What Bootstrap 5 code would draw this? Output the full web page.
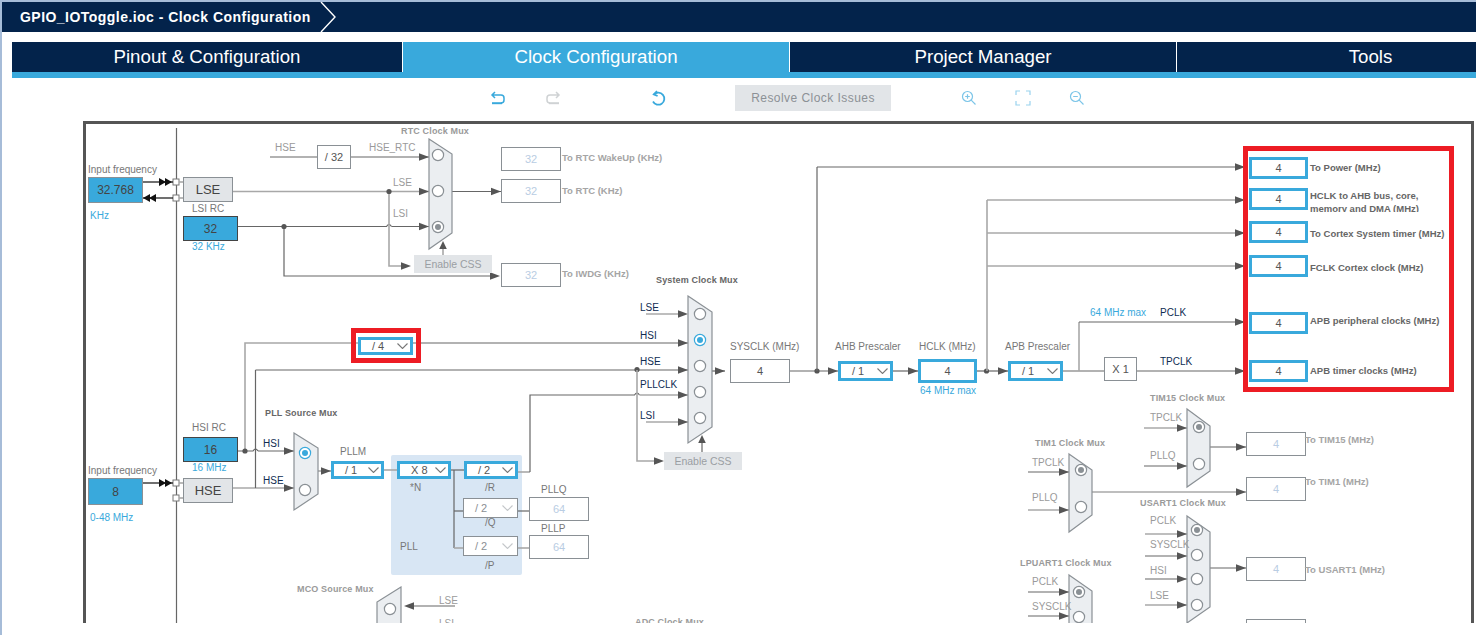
<!DOCTYPE html>
<html lang="en">
<head>
    <meta charset="UTF-8">
    <meta name="viewport" content="width=device-width, initial-scale=1.0">
    <title>GPIO_IOToggle.ioc - Clock Configuration</title>
    <link href="https://cdn.jsdelivr.net/npm/bootstrap@5.3.0/dist/css/bootstrap.min.css" rel="stylesheet">
    <style>
        html, body { height: 635px; overflow: hidden; background: #fff; }
        body { font-family: "Liberation Sans", Arial, sans-serif; }
        .app-shell { height: 635px; padding: 2px 0 0 2px; background: linear-gradient(#a6bcd8, #a6bcd8) 0 0 / 2px 100% no-repeat, linear-gradient(#a6bcd8, #a6bcd8) 0 0 / 100% 2px no-repeat; }
        .title-bar { height: 30px; background: #03234b; color: #fff; font-weight: 700; font-size: 14px; letter-spacing: .46px; padding-left: 18px; }
        .title-bar svg { margin-left: 9px; }
        .tab-strip { display: grid; grid-template-columns: 391px 387px 387px 387px; margin: 10px 0 0 10px; height: 36px; border-bottom: 6px solid #39a9dc; overflow: hidden; }
        .tab-item { display: flex; align-items: center; justify-content: center; height: 30px; background: #03234b; color: #fff; font-size: 18.7px; border-right: 1px solid #fff; text-decoration: none; }
        .tab-item:last-child { border-right: 0; }
        .tab-item.is-current { background: #39a9dc; }
        .tool-row { height: 43px; padding: 0 0 3px 488px; }
        .tool-row svg { flex: none; }
        .gap-redo { margin-left: 39px; }
        .gap-refresh { margin-left: 89px; }
        .gap-resolve { margin-left: 69px; }
        .gap-zoom { margin-left: 70px; }
        .gap-fit { margin-left: 38px; }
        .resolve-btn { width: 156px; height: 26px; border: 0; background: #e2e5e8; color: #8c9196; font-size: 12px; letter-spacing: .45px; padding: 0; }
        .clock-frame { position: relative; margin-left: 81px; width: 1391px; height: 502px; border: 3px solid #555; border-bottom: 0; overflow: hidden; }
        .wires { position: absolute; left: 0; top: 0; }
        .pll-zone { position: absolute; background: #d8e6f4; border-radius: 2px; }
        .node { position: absolute; display: flex; align-items: center; justify-content: center; font-size: 11px; color: #555; background: #fff; }
        .node-src { background: #39a9dc; border: 1px solid #8a9095; font-size: 12px; color: #444; }
        .node-src-dark { border-color: #444; }
        .node-hw { background: #e2e5e8; border: 1px solid #8a9095; font-size: 13px; color: #444; }
        .node-val { border: 1px solid #8a9095; }
        .node-live { border: 3px solid #39a9dc; }
        .node-off { border: 1px solid #8a9095; color: #b9cde3; font-size: 11px; }
        .node-css { background: #e2e5e8; color: #9a9ea3; font-size: 10.5px; padding-top: 2px; }
        .node-drop { justify-content: space-between; padding: 0 2px 0 11px; font-size: 11px; }
        .node-drop.node-off { color: #8a8f94; padding: 0 4px 0 11px; }
        .diag-label { position: absolute; white-space: nowrap; transform: translateY(-50%); font-size: 10px; line-height: 1; color: #777; }
        .lb-blue { color: #39a9dc; }
        .lb-navy { color: #0f2c52; }
        .lb-head { font-weight: 700; font-size: 9px; color: #9a9a9a; letter-spacing: .15px; }
        .lb-head-dark { color: #666; }
        .lb-out { font-weight: 700; font-size: 9.5px; color: #666; }
        .lb-out-off { font-weight: 700; font-size: 9.5px; color: #a5a5a5; }
        .lb-off { color: #9a9a9a; }
        .lb-clip { height: 8px; overflow: hidden; }
        .red-mark { position: absolute; border: 5px solid #ed1c24; z-index: 5; }
    </style>
</head>
<body>
    <div class="app-shell">
        <header class="title-bar d-flex align-items-center">
            <span>GPIO_IOToggle.ioc - Clock Configuration</span>
            <svg width="18" height="30" viewBox="0 0 18 30"><path d="M1 0 L15 15 L1 30" fill="none" stroke="#fff" stroke-width="1.4"/></svg>
        </header>

        <nav class="tab-strip">
            <a class="tab-item" href="#">Pinout &amp; Configuration</a>
            <a class="tab-item is-current" href="#">Clock Configuration</a>
            <a class="tab-item" href="#">Project Manager</a>
            <a class="tab-item" href="#">Tools</a>
        </nav>

        <!-- Toolbar -->
        <div class="tool-row d-flex align-items-center">
            <svg width="16" height="16" viewBox="0 0 16 16" fill="none" stroke="#39a9dc" stroke-width="1.5"><path d="M5 2 L2 5 L5 8 M2 5 H11 Q14 5 14 8 V10 Q14 13 11 13"/><path d="M2 13.2 H12" stroke-width="2"/></svg>
            <svg class="gap-redo" width="16" height="16" viewBox="0 0 16 16" fill="none" stroke="#cfd2d4" stroke-width="1.5"><path d="M11 2 L14 5 L11 8 M14 5 H5 Q2 5 2 8 V10 Q2 13 5 13"/><path d="M4 13.2 H14" stroke-width="2"/></svg>
            <svg class="gap-refresh" width="16" height="17" viewBox="0 0 16 17" fill="none" stroke="#39a9dc" stroke-width="1.8"><path d="M4 4.5 A6 6 0 1 1 3 11.5"/><path d="M7 1 L3.8 4.4 L7.6 6"/></svg>
            <button class="resolve-btn gap-resolve" type="button">Resolve Clock Issues</button>
            <svg class="gap-zoom" width="16" height="16" viewBox="0 0 16 16" fill="none" stroke="#7cc5e8" stroke-width="1.2"><circle cx="6.5" cy="6.5" r="5"/><path d="M10.2 10.2 L14.5 14.5 M4.2 6.5 H8.8 M6.5 4.2 V8.8"/></svg>
            <svg class="gap-fit" width="16" height="16" viewBox="0 0 16 16" fill="none" stroke="#9ad3ee" stroke-width="1.2"><path d="M1 5 V1 H5 M11 1 H15 V5 M15 11 V15 H11 M5 15 H1 V11"/></svg>
            <svg class="gap-fit" width="16" height="16" viewBox="0 0 16 16" fill="none" stroke="#7cc5e8" stroke-width="1.2"><circle cx="6.5" cy="6.5" r="5"/><path d="M10.2 10.2 L14.5 14.5 M4.2 6.5 H8.8"/></svg>
        </div>

        <!-- Clock tree -->
        <div class="clock-frame" id="clockFrame">
            <div class="pll-zone" id="pllZone"></div>
            <svg class="wires" id="wires" width="1385" height="501" viewBox="86 124 1385 501"></svg>
        </div>
    </div>

    <script src="https://cdn.jsdelivr.net/npm/bootstrap@5.3.0/dist/js/bootstrap.bundle.min.js"></script>
    <script>
        // All data below is in screenshot coordinates, frame inner corner is at 86,124
        const OX = 86, OY = 124;
        const frame = document.getElementById('clockFrame');
        let svg = '';

        const DARK = '#666', SOFT = '#a8a8a8', TIP = '#555';

        function place(el, x1, y1, x2, y2) {
            el.style.left = (x1 - OX) + 'px';
            el.style.top = (y1 - OY) + 'px';
            el.style.width = (x2 - x1) + 'px';
            el.style.height = (y2 - y1) + 'px';
        }

        function line(d, soft) {
            svg += `<path d="${d}" fill="none" stroke="${soft ? SOFT : DARK}" stroke-width="${soft ? 1.6 : 1.2}"/>`;
        }
        function dot(x, y) {
            svg += `<circle cx="${x}" cy="${y}" r="2.6" fill="#555"/>`;
        }
        function tipRight(x, y) {
            svg += `<path d="M${x} ${y} l-10 -3.8 v7.6 z" fill="${TIP}"/>`;
        }
        function tipLeft(x, y) {
            svg += `<path d="M${x} ${y} l10 -3.8 v7.6 z" fill="${TIP}"/>`;
        }
        function tipUp(x, y) {
            svg += `<path d="M${x} ${y} l-3.8 8 h7.6 z" fill="${TIP}"/>`;
        }
        // horizontal wire ending in an arrow, from x1 to x2
        function arrow(x1, y, x2, soft) {
            line(`M${x1} ${y} H${x2}`, soft);
            tipRight(x2, y);
        }

        // Mux shapes, with their selector circles: [cx, cy, state]
        function mux(points, circles) {
            svg += `<polygon points="${points}" fill="#ebeef1" stroke="#8a9095" stroke-width="1.2"/>`;
            circles.forEach(c => {
                const blue = c[2] === 'on';
                const stroke = blue ? '#39a9dc' : '#8a9095';
                svg += `<circle cx="${c[0]}" cy="${c[1]}" r="5.6" fill="#fff" stroke="${stroke}" stroke-width="1.2"/>`;
                if (c[2]) svg += `<circle cx="${c[0]}" cy="${c[1]}" r="3" fill="${blue ? '#39a9dc' : '#8a9095'}"/>`;
            });
        }

        // Left input rail
        line('M176.5 128 V625');
        [[176, 182], [176, 198], [176, 483], [176, 498]].forEach(p => {
            svg += `<rect x="${p[0] - 3}" y="${p[1] - 3}" width="6" height="6" fill="#fff" stroke="#777"/>`;
            line(`M${p[0] + 3} ${p[1]} H183`, true);
        });
        function blackArrows(x1, y, x2, dir) {
            svg += `<path d="M${x1} ${y} H${x2}" stroke="#111" stroke-width="1.2"/>`;
            const base = dir > 0 ? x2 - 14 : x1;
            [0, 6].forEach(s => {
                const at = base + s;
                svg += dir > 0
                    ? `<path d="M${at} ${y - 4} l7 4 l-7 4 z" fill="#111"/>`
                    : `<path d="M${at + 7} ${y - 4} l-7 4 l7 4 z" fill="#111"/>`;
            });
        }
        blackArrows(143, 182, 173, 1);
        blackArrows(143, 198, 173, -1);
        blackArrows(143, 483, 173, 1);

        // RTC part
        line('M270 157 H317');
        arrow(351, 157, 429);
        arrow(233, 191.5, 429, true);
        line('M238 226.5 H386.5 q2.5 -4 5 0');
        arrow(391.5, 226.5, 429);
        line('M389 191 V266 H402', true);
        tipRight(411, 266);
        line('M284 226 V276 H495');
        tipRight(500, 276);
        arrow(452, 191.5, 501);
        dot(284, 226.5);
        dot(389, 191.5);
        line('M443 255 V245', true);
        tipUp(443, 241);

        // HSI, HSE and the system clock mux inputs
        line('M238 451 H253 q2.5 -4 5 0');
        arrow(258, 451, 294);
        line('M245 451 V343 H358', true);
        arrow(413, 343, 688);
        arrow(233, 488, 294, true);
        line('M255.5 488 V370');
        arrow(255.5, 370, 688);
        dot(245, 451);
        dot(637, 369.5);
        line('M646 314 H680', true);
        tipRight(688, 314);
        line('M530 472 H518', true);
        line('M530 472 V395 H634.5 q2.5 -4 5 0');
        arrow(639.5, 395, 688, true);
        arrow(646, 422, 688, true);
        line('M637 370 V461 H656', true);
        tipRight(664, 461);
        line('M702 452 V441');
        tipUp(702, 435);

        // PLL block
        arrow(318, 471, 331, true);
        line('M384 470 H397', true);
        line('M451 470 H464');
        line('M454 470 V548');
        line('M454 511 H463');
        line('M454 548 H463', true);
        line('M518 511 H529');
        line('M518 548 H529', true);

        // SYSCLK onward
        arrow(712, 371, 725);
        arrow(790, 371, 838);
        dot(817, 371);
        line('M817 371 V167');
        arrow(817, 167, 1245);
        arrow(893, 371, 918);
        arrow(977, 371, 1008);
        dot(986.5, 371);
        line('M987 371 V200', true);
        arrow(987, 200, 1245, true);
        arrow(987, 233, 1245, true);
        arrow(987, 266, 1245, true);
        line('M1063 371 H1104');
        line('M1079 371 V322', true);
        arrow(1079, 322, 1245);
        arrow(1137, 371, 1245);

        // MCO
        line('M455 606 H410');
        tipLeft(404, 606);

        // Peripheral muxes
        arrow(1144, 428, 1187, true);
        arrow(1144, 466, 1187);
        arrow(1210, 447, 1246);
        arrow(1028, 472, 1069);
        arrow(1028, 510, 1069, true);
        arrow(1092, 492, 1246, true);
        arrow(1145, 534, 1187, true);
        arrow(1145, 556, 1187);
        arrow(1145, 579, 1187);
        arrow(1145, 605, 1187, true);
        arrow(1210, 568, 1246);
        arrow(1028, 592, 1069);
        arrow(1028, 616, 1069);

        mux('429,139 452,154 452,233 429,249', [[438, 155], [438, 191], [438, 227, 'grey']]);
        mux('688,296 712,312 712,427 688,443', [[700, 314], [700, 340, 'on'], [700, 366], [700, 392], [700, 418]]);
        mux('294,433 318,448 318,494 294,510', [[305, 453, 'on'], [305, 490]]);
        mux('401,587 377,602 377,700 401,715', [[390, 609]]);
        mux('1187,409 1210,426 1210,471 1187,487', [[1199, 427, 'grey'], [1199, 464]]);
        mux('1069,454 1092,470 1092,515 1069,532', [[1081, 470, 'grey'], [1081, 507]]);
        mux('1187,516 1210,532 1210,607 1187,623', [[1197, 530, 'grey'], [1197, 555], [1197, 579], [1197, 605]]);
        mux('1069,575 1092,591 1092,700 1069,715', [[1079, 592, 'grey'], [1079, 617]]);

        document.getElementById('wires').innerHTML = svg;
        place(document.getElementById('pllZone'), 391, 455, 522, 575);

        // Boxes: x1, y1, x2, y2, text, class
        const nodes = [
            [88, 177, 143, 203, '32.768', 'node-src'],
            [88, 478, 143, 505, '8', 'node-src'],
            [183, 216, 238, 241, '32', 'node-src node-src-dark'],
            [183, 437, 238, 462, '16', 'node-src node-src-dark'],
            [183, 177, 233, 202, 'LSE', 'node-hw'],
            [183, 478, 233, 503, 'HSE', 'node-hw'],
            [317, 145, 351, 169, '/ 32', 'node-val'],
            [501, 147, 561, 171, '32', 'node-off'],
            [501, 179, 561, 203, '32', 'node-off'],
            [501, 263, 561, 287, '32', 'node-off'],
            [529, 497, 589, 521, '64', 'node-off'],
            [529, 535, 589, 559, '64', 'node-off'],
            [414, 255, 492, 273, 'Enable CSS', 'node-css'],
            [664, 452, 742, 470, 'Enable CSS', 'node-css'],
            [730, 359, 790, 383, '4', 'node-val'],
            [918, 359, 977, 383, '4', 'node-live'],
            [1104, 357, 1137, 381, 'X 1', 'node-val'],
            [1249, 157, 1308, 179, '4', 'node-live'],
            [1249, 188, 1308, 210, '4', 'node-live'],
            [1249, 221, 1308, 243, '4', 'node-live'],
            [1249, 255, 1308, 277, '4', 'node-live'],
            [1249, 312, 1308, 334, '4', 'node-live'],
            [1249, 360, 1308, 382, '4', 'node-live'],
            [1246, 432, 1306, 456, '4', 'node-off'],
            [1246, 477, 1306, 501, '4', 'node-off'],
            [1246, 557, 1306, 581, '4', 'node-off'],
            [1246, 619, 1306, 643, '', 'node-off']
        ];
        nodes.forEach(n => {
            const el = document.createElement('div');
            el.className = 'node ' + n[5];
            el.textContent = n[4];
            place(el, n[0], n[1], n[2], n[3]);
            frame.appendChild(el);
        });

        // Dropdowns
        const drops = [
            [358, 337, 413, 355, '/ 4', 'node-live'],
            [331, 461, 384, 479, '/ 1', 'node-live'],
            [397, 461, 451, 479, 'X 8', 'node-live'],
            [464, 461, 518, 479, '/ 2', 'node-live'],
            [463, 498, 518, 518, '/ 2', 'node-off'],
            [463, 536, 518, 556, '/ 2', 'node-off'],
            [838, 361, 893, 381, '/ 1', 'node-live'],
            [1008, 361, 1063, 381, '/ 1', 'node-live']
        ];
        drops.forEach(d => {
            const el = document.createElement('div');
            const faint = d[5] === 'node-off';
            el.className = 'node node-drop ' + d[5];
            el.innerHTML = `<span>${d[4]}</span><svg width="11" height="6" viewBox="0 0 11 6" fill="none" stroke="${faint ? '#c4c7ca' : '#777'}" stroke-width="1.1"><path d="M.5 .5 L5.5 5.5 L10.5 .5"/></svg>`;
            place(el, d[0], d[1], d[2], d[3]);
            frame.appendChild(el);
        });

        // Labels: x, centre y, text, class
        const labels = [
            [88, 170, 'Input frequency', ''],
            [90, 216, 'KHz', 'lb-blue'],
            [192, 209, 'LSI RC', ''],
            [192, 247, '32 KHz', 'lb-blue'],
            [192, 428, 'HSI RC', ''],
            [192, 468, '16 MHz', 'lb-blue'],
            [88, 471, 'Input frequency', ''],
            [90, 518, '0-48 MHz', 'lb-blue'],
            [275, 148, 'HSE', 'lb-off'],
            [369, 148, 'HSE_RTC', 'lb-off'],
            [393, 183, 'LSE', 'lb-off'],
            [393, 214, 'LSI', 'lb-off'],
            [401, 131, 'RTC Clock Mux', 'lb-head'],
            [656, 280, 'System Clock Mux', 'lb-head lb-head-dark'],
            [265, 413, 'PLL Source Mux', 'lb-head lb-head-dark'],
            [297, 589, 'MCO Source Mux', 'lb-head'],
            [635, 622, 'ADC Clock Mux', 'lb-head'],
            [1150, 398, 'TIM15 Clock Mux', 'lb-head'],
            [1035, 443, 'TIM1 Clock Mux', 'lb-head'],
            [1140, 503, 'USART1 Clock Mux', 'lb-head'],
            [1020, 563, 'LPUART1 Clock Mux', 'lb-head'],
            [562, 158, 'To RTC WakeUp (KHz)', 'lb-out-off'],
            [562, 191, 'To RTC (KHz)', 'lb-out-off'],
            [562, 274, 'To IWDG (KHz)', 'lb-out-off'],
            [640, 308, 'LSE', 'lb-navy'],
            [640, 336, 'HSI', 'lb-navy'],
            [640, 362, 'HSE', 'lb-navy'],
            [640, 385, 'PLLCLK', 'lb-navy'],
            [640, 416, 'LSI', 'lb-navy'],
            [730, 347, 'SYSCLK (MHz)', ''],
            [835, 347, 'AHB Prescaler', ''],
            [919, 347, 'HCLK (MHz)', ''],
            [1005, 347, 'APB Prescaler', ''],
            [920, 391, '64 MHz max', 'lb-blue'],
            [1090, 313, '64 MHz max', 'lb-blue'],
            [1160, 313, 'PCLK', 'lb-navy'],
            [1160, 362, 'TPCLK', 'lb-navy'],
            [1310, 168, 'To Power (MHz)', 'lb-out'],
            [1310, 196, 'HCLK to AHB bus, core,', 'lb-out'],
            [1310, 208, 'memory and DMA (MHz)', 'lb-out lb-clip'],
            [1310, 234, 'To Cortex System timer (MHz)', 'lb-out'],
            [1310, 268, 'FCLK Cortex clock (MHz)', 'lb-out'],
            [1310, 321, 'APB peripheral clocks (MHz)', 'lb-out'],
            [1310, 371, 'APB timer clocks (MHz)', 'lb-out'],
            [263, 444, 'HSI', 'lb-navy'],
            [263, 481, 'HSE', 'lb-navy'],
            [340, 452, 'PLLM', ''],
            [410, 488, '*N', ''],
            [485, 488, '/R', ''],
            [485, 523, '/Q', ''],
            [485, 566, '/P', ''],
            [400, 547, 'PLL', ''],
            [541, 490, 'PLLQ', ''],
            [541, 529, 'PLLP', ''],
            [439, 601, 'LSE', 'lb-off'],
            [439, 624, 'LSI', 'lb-off'],
            [1150, 418, 'TPCLK', 'lb-off'],
            [1150, 456, 'PLLQ', 'lb-off'],
            [1032, 463, 'TPCLK', 'lb-off'],
            [1032, 498, 'PLLQ', 'lb-off'],
            [1150, 521, 'PCLK', 'lb-off'],
            [1150, 545, 'SYSCLK', 'lb-off'],
            [1150, 571, 'HSI', 'lb-off'],
            [1150, 596, 'LSE', 'lb-off'],
            [1032, 582, 'PCLK', 'lb-off'],
            [1032, 607, 'SYSCLK', 'lb-off'],
            [1305, 440, 'To TIM15 (MHz)', 'lb-out-off'],
            [1305, 482, 'To TIM1 (MHz)', 'lb-out-off'],
            [1305, 570, 'To USART1 (MHz)', 'lb-out-off']
        ];
        labels.forEach(l => {
            const el = document.createElement('div');
            el.className = 'diag-label ' + l[3];
            el.textContent = l[2];
            el.style.left = (l[0] - OX) + 'px';
            el.style.top = (l[1] - OY) + 'px';
            frame.appendChild(el);
        });

        // Red highlight rectangles drawn on top of the diagram
        [[351, 328, 421, 363], [1243, 146, 1454, 392]].forEach(r => {
            const el = document.createElement('div');
            el.className = 'red-mark';
            place(el, r[0], r[1], r[2], r[3]);
            frame.appendChild(el);
        });
    </script>
</body>
</html>
